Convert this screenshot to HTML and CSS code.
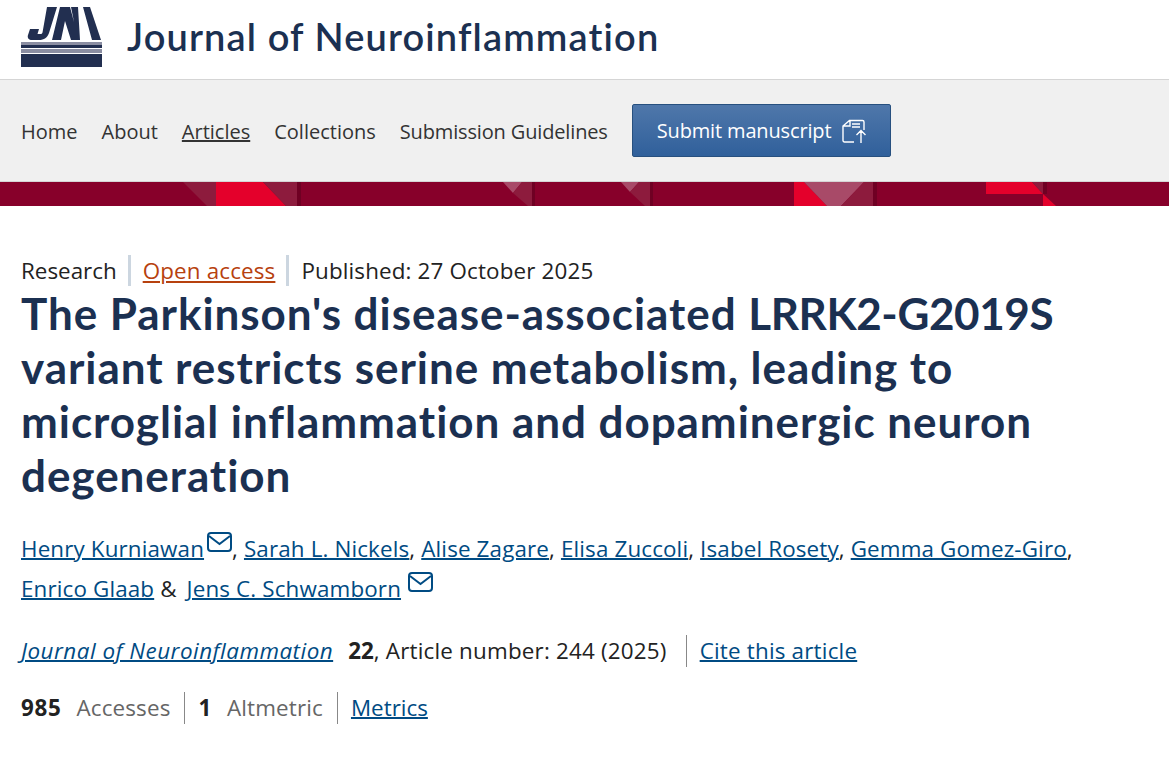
FILE: index.html
```html
<!DOCTYPE html>
<html lang="en">
<head>
    <meta charset="UTF-8">
    <title>Journal of Neuroinflammation</title>
    <link rel="stylesheet" href="styles.css">
</head>
<body>
    <header class="masthead">
        <svg class="logo" width="81" height="60" viewBox="0 0 81 60">
            <path fill="#222f50" d="M26 0h10l-8 26c-1.500 4.500-5 7-10 7H11c-3 0-5-2-4-5l2-6h9l-1.500 5h3c1 0 1.500-.5 2-1.500zM31 33L39 0h10l4 15L50 0h7l2 33h-9l-6-19-4 19zM62 0h7l11 33h-9z"/>
            <path fill="#8b8ea2" d="M0 35h81v3H0zM0 42h81v4H0z"/>
            <path fill="#222f50" d="M0 38h81v3H0zM0 47h81v13H0z"/>
        </svg>
        <span class="journal-name">Journal of Neuroinflammation</span>
    </header>
    <nav class="nav">
        <a href="#">Home</a>
        <a href="#">About</a>
        <a href="#" class="current">Articles</a>
        <a href="#">Collections</a>
        <a href="#" class="tight">Submission Guidelines</a>
        <a href="#" class="submit tight">Submit manuscript
            <svg width="24" height="24" viewBox="0 0 24 24" fill="none" stroke="#fff" stroke-width="1.400">
                <path d="M12 23H2.500a1.500 1.500 0 0 1-1.500-1.500V7l6.500-5.500H20.500a1.500 1.500 0 0 1 1.500 1.500v8M1 7h7V1.500M10 5h8M10 8h8M19 24V11.500M14.500 16L19 11.500l4.500 4.500"/>
            </svg>
        </a>
    </nav>
    <svg class="band" width="1169" height="24" viewBox="0 0 1169 24">
        <rect class="shadow" x="297" width="4" height="24"/>
        <rect class="shadow" x="532" width="3" height="24"/>
        <rect class="shadow" x="650" width="3" height="24"/>
        <rect class="shadow" x="873" width="4" height="24"/>
        <rect class="shadow" x="1043" width="4" height="12"/>
        <polygon class="mid" points="183,0 216,0 216,24 207,24"/>
        <polygon class="red" points="216,0 263,0 286,24 216,24"/>
        <polygon class="mid" points="263,0 297,0 297,24 286,24"/>
        <polygon class="pale" points="503,0 522,0 513,11"/>
        <polygon class="mid" points="522,0 532,0 532,24 528,24 513,11"/>
        <polygon class="pale" points="621,0 639,0 630,10"/>
        <polygon class="mid" points="639,0 650,0 650,24 645,24 630,10"/>
        <polygon class="red" points="794,0 804,0 827,24 794,24"/>
        <polygon class="pale" points="804,0 864,0 841,24 827,24"/>
        <polygon class="mid" points="864,0 873,0 873,24 841,24"/>
        <polygon class="red" points="986,0 1032,0 1043,12 986,12"/>
        <polygon class="mid" points="1032,0 1043,0 1043,12"/>
        <polygon class="red" points="1043,12 1056,24 1043,24"/>
    </svg>
    <main class="article">
        <ul class="meta">
            <li>Research</li>
            <li><a href="#" class="open">Open access</a></li>
            <li>Published: 27 October 2025</li>
        </ul>
        <h1>The Parkinson's disease-associated <span class="gene">LRRK2-G2019S</span> variant restricts serine metabolism, leading to microglial inflammation and dopaminergic neuron degeneration</h1>
        <p class="authors"><a href="#">Henry Kurniawan</a><svg class="mail" width="25" height="20" viewBox="0 0 25 20" fill="none" stroke="#004b83" stroke-width="2"><rect x="1" y="1" width="23" height="18" rx="3"/><path d="M2 4l10.500 8L23 4"/></svg>, <a href="#">Sarah L. Nickels</a>, <a href="#">Alise Zagare</a>, <a href="#">Elisa Zuccoli</a>, <a href="#">Isabel Rosety</a>, <a href="#">Gemma Gomez-Giro</a>,<br><a href="#">Enrico Glaab</a> <span class="amp">&amp;</span> <a href="#">Jens C. Schwamborn</a><svg class="mail last" width="25" height="20" viewBox="0 0 25 20" fill="none" stroke="#004b83" stroke-width="2"><rect x="1" y="1" width="23" height="18" rx="3"/><path d="M2 4l10.500 8L23 4"/></svg></p>
        <p class="citation"><a href="#" class="journal"><i>Journal of Neuroinflammation</i></a><b>22</b><span class="number">, Article number: 244 (2025)</span><span class="sep"></span><a href="#" class="cite">Cite this article</a></p>
        <p class="stats"><b>985</b><span class="muted">Accesses</span><span class="sep"></span><b>1</b><span class="muted">Altmetric</span><span class="sep"></span><a href="#">Metrics</a></p>
    </main>
</body>
</html>
```
FILE: styles.css
```css
body {
    margin: 0;
    font-family: "Open Sans", Arial, sans-serif;
    color: #222;
    background: #fff;
}
.masthead {
    display: flex;
    align-items: center;
    gap: 25px;
    height: 79px;
    padding: 0 21px;
}
.logo {
    flex: none;
    margin-top: -5px;
}
.journal-name {
    margin-top: -8px;
    font-family: Lato, sans-serif;
    font-size: 38px;
    font-weight: 600;
    letter-spacing: 1.130px;
    font-variant-ligatures: none;
    color: #1b3051;
}
.nav {
    display: flex;
    align-items: center;
    gap: 24px;
    height: 101px;
    padding: 0 21px;
    background: #f0f0f0;
    border-top: 1px solid #d5d5d5;
    border-bottom: 1px solid #d5d5d5;
}
.nav a {
    padding-top: 2px;
    font-size: 20px;
    color: #333;
    text-decoration: none;
}
.nav a.tight {
    letter-spacing: -0.15px;
}
.nav a.current {
    text-decoration: underline;
}
.nav a.submit {
    display: flex;
    align-items: center;
    gap: 11px;
    box-sizing: border-box;
    height: 53px;
    padding: 0 24px;
    color: #fff;
    background: linear-gradient(#4f77aa, #30609b);
    border: 1px solid #27507f;
    border-radius: 2px;
}
.band {
    display: block;
    background: #87002a;
}
.band .red {
    fill: #e4002b;
}
.band .mid {
    fill: #8d1b3d;
}
.band .pale {
    fill: #a84a68;
}
.band .shadow {
    fill: #6f0023;
}
.article {
    padding: 49px 21px 0;
}
.meta {
    display: flex;
    margin: 0;
    padding: 0;
    list-style: none;
    font-size: 22.400px;
}
.meta li + li {
    margin-left: 11px;
    padding-left: 12px;
    letter-spacing: 0.15px;
    border-left: 3px solid #ccd6e0;
}
.open {
    color: #b7410e;
}
h1 {
    max-width: 1040px;
    margin: 0 0 27px;
    font-family: Lato, sans-serif;
    font-size: 44px;
    line-height: 54px;
    font-weight: 700;
    letter-spacing: 0.95px;
    font-variant-ligatures: none;
    color: #1b3051;
}
.gene {
    letter-spacing: -0.4px;
}
.authors {
    margin: 0 0 24px;
    font-size: 22.400px;
    line-height: 40px;
    letter-spacing: 0.14px;
}
.authors a, .citation a, .stats a {
    color: #004b83;
    text-decoration-thickness: 2px;
}
.amp {
    margin-right: 4px;
}
.mail {
    margin-left: 3px;
    vertical-align: 5px;
}
.mail.last {
    margin-left: 7px;
}
.citation, .stats {
    display: flex;
    align-items: center;
    margin: 0 0 21px;
    font-size: 22.400px;
    line-height: 36px;
}
.citation .journal {
    letter-spacing: 0.5px;
}
.citation .cite {
    letter-spacing: 0.2px;
}
.citation b {
    margin-left: 15px;
}
.number {
    letter-spacing: 0.2px;
}
.stats b {
    letter-spacing: 0.7px;
}
.stats .muted {
    margin-left: 15px;
    letter-spacing: 0.15px;
    color: #666;
}
.sep {
    height: 32px;
    margin: 0 13px 0 14px;
    border-left: 1px solid #888;
}
.citation .sep {
    margin-left: 19px;
}
```
